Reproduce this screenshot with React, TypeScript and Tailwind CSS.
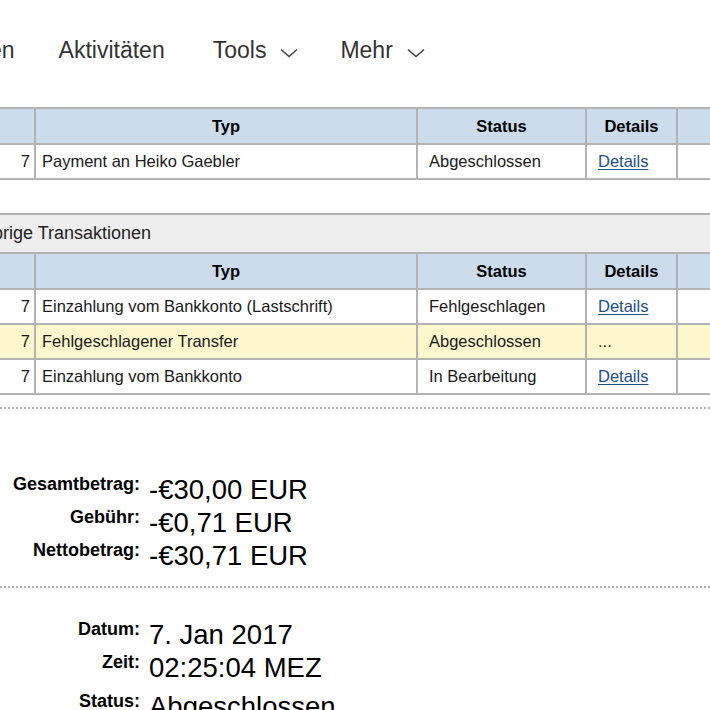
import type { ReactNode } from 'react';

const font = { fontFamily: '"Liberation Sans", Arial, Helvetica, sans-serif' };

const Chevron = () => (
  <svg width="18" height="10" viewBox="0 0 18 10" className="ml-[14px] mt-[4px]">
    <polyline points="1,1.5 9,8.5 17,1.5" fill="none" stroke="#444" strokeWidth="1.6" />
  </svg>
);

type Row = { typ: string; status: string; details: 'link' | 'dots'; yellow?: boolean };

const Cell = ({ w, children, className = '' }: { w: string; children?: ReactNode; className?: string }) => (
  <div className={`${w} shrink-0 h-full border-r-2 border-[#b3b3b3] flex items-center ${className}`}>{children}</div>
);

const HeaderRow = () => (
  <div className="flex h-[36px] border-b-2 border-[#b3b3b3] bg-[#cddcec] font-bold text-black">
    <Cell w="w-[36px]" />
    <Cell w="w-[382px]" className="justify-center">Typ</Cell>
    <Cell w="w-[169px]" className="justify-center">Status</Cell>
    <Cell w="w-[91px]" className="justify-center">Details</Cell>
    <div className="flex-1" />
  </div>
);

const DataRow = ({ row }: { row: Row }) => (
  <div className={`flex h-[35px] border-b-2 border-[#b3b3b3] text-[#1a1a1a] ${row.yellow ? 'bg-[#fdf7cd]' : 'bg-white'}`}>
    <Cell w="w-[36px]" className="justify-end pr-[4px]">7</Cell>
    <Cell w="w-[382px]" className="pl-[6px]">{row.typ}</Cell>
    <Cell w="w-[169px]" className="pl-[11px]">{row.status}</Cell>
    <Cell w="w-[91px]" className="pl-[11px]">
      {row.details === 'link' ? (
        <span className="text-[#1d4f8c] underline underline-offset-2">Details</span>
      ) : (
        <span className="text-[#333]">...</span>
      )}
    </Cell>
    <div className="flex-1" />
  </div>
);

const Field = ({ label, value }: { label: string; value: string }) => (
  <div className="flex h-[33px] items-start">
    <div className="w-[140px] shrink-0 text-right text-[18px] font-bold leading-[22px] text-black">{label}</div>
    <div className="ml-[9px] whitespace-nowrap text-[27.5px] leading-[33px] text-black">{value}</div>
  </div>
);

const Dotted = () => <div className="h-0 border-t-2 border-dotted border-[#b0b0b0]" />;

export default function App() {
  const recent: Row[] = [
    { typ: 'Einzahlung vom Bankkonto (Lastschrift)', status: 'Fehlgeschlagen', details: 'link' },
    { typ: 'Fehlgeschlagener Transfer', status: 'Abgeschlossen', details: 'dots', yellow: true },
    { typ: 'Einzahlung vom Bankkonto', status: 'In Bearbeitung', details: 'link' },
  ];

  return (
    <div className="w-[710px] h-[710px] overflow-hidden bg-white" style={font}>
      <nav className="flex h-[107px] items-center whitespace-nowrap pb-[6px] text-[23px] text-[#333]">
        <span className="-ml-[11px]">en</span>
        <span className="ml-[44px]">Aktivitäten</span>
        <span className="ml-[48px] flex items-center">
          Tools
          <Chevron />
        </span>
        <span className="ml-[42px] flex items-center">
          Mehr
          <Chevron />
        </span>
      </nav>

      <div className="text-[16.5px]">
        <div className="border-t-2 border-[#b3b3b3]">
          <HeaderRow />
          <DataRow row={{ typ: 'Payment an Heiko Gaebler', status: 'Abgeschlossen', details: 'link' }} />
        </div>

        <div className="mt-[33px] border-t-2 border-[#b3b3b3]">
          <div className="flex h-[39px] items-center border-b-2 border-[#b3b3b3] bg-[#eeeeee] text-[18px] text-[#222]">
            <span className="-ml-[20px] whitespace-nowrap">Übrige Transaktionen</span>
          </div>
          <HeaderRow />
          {recent.map((r) => (
            <DataRow key={r.typ} row={r} />
          ))}
        </div>
      </div>

      <div className="mt-[12px]">
        <Dotted />
      </div>

      <div className="mt-[64px]">
        <Field label="Gesamtbetrag:" value="-€30,00 EUR" />
        <Field label="Gebühr:" value="-€0,71 EUR" />
        <Field label="Nettobetrag:" value="-€30,71 EUR" />
      </div>

      <div className="mt-[14px]">
        <Dotted />
      </div>

      <div className="mt-[30px]">
        <Field label="Datum:" value="7. Jan 2017" />
        <Field label="Zeit:" value="02:25:04 MEZ" />
        <div className="mt-[6px]">
          <Field label="Status:" value="Abgeschlossen" />
        </div>
      </div>
    </div>
  );
}
